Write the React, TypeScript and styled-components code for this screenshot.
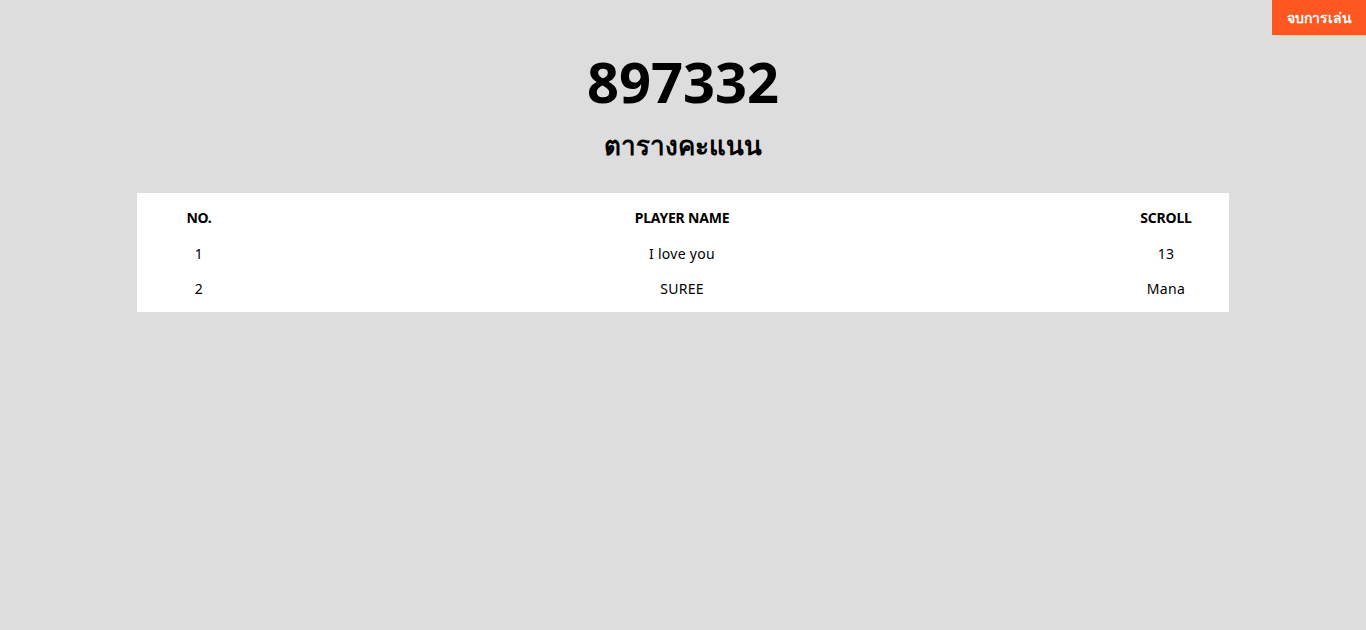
import React from "react";
import styled, { createGlobalStyle } from "styled-components";

const Global = createGlobalStyle`
  html, body { margin: 0; padding: 0; }
  body {
    background: #dddddd;
    font-family: "Noto Sans", "Open Sans", "DejaVu Sans", sans-serif;
    color: #000;
    min-height: 630px;
  }
`;

const Page = styled.div`
  position: relative;
  width: 1366px;
  min-height: 630px;
  display: flex;
  flex-direction: column;
  align-items: center;
`;

const EndButton = styled.button`
  position: absolute;
  top: 0;
  right: 0;
  width: 94px;
  height: 35px;
  border: none;
  background: #ff5722;
  color: #fff;
  font-family: inherit;
  font-size: 14px;
  font-weight: 700;
  cursor: pointer;
  padding: 0;
`;

const Code = styled.h1`
  margin: 43px 0 0;
  font-size: 56px;
  line-height: 76px;
  font-weight: 700;
`;

const Title = styled.h2`
  margin: 6px 0 0;
  font-size: 26px;
  line-height: 40px;
  font-weight: 700;
`;

const Board = styled.div`
  margin-top: 28px;
  width: 1092px;
  background: #fff;
  padding: 6px 0;
  display: grid;
  grid-template-columns: 124px 1fr 126px;
`;

const Cell = styled.div<{ $head?: boolean; $h?: number }>`
  height: ${(p) => p.$h ?? 35}px;
  display: flex;
  align-items: center;
  justify-content: center;
  font-size: 14px;
  font-weight: ${(p) => (p.$head ? 700 : 400)};
  letter-spacing: ${(p) => (p.$head ? "-0.2px" : "0.3px")};
`;

const rows = [
  ["1", "I love you", "13"],
  ["2", "SUREE", "Mana"],
];

export default function App() {
  return (
    <Page>
      <Global />
      <EndButton>จบการเล่น</EndButton>
      <Code>897332</Code>
      <Title>ตารางคะแนน</Title>
      <Board>
        <Cell $head $h={37}>NO.</Cell>
        <Cell $head $h={37}>PLAYER NAME</Cell>
        <Cell $head $h={37}>SCROLL</Cell>
        {rows.map((r) =>
          r.map((c, i) => <Cell key={r[0] + i}>{c}</Cell>)
        )}
      </Board>
    </Page>
  );
}
